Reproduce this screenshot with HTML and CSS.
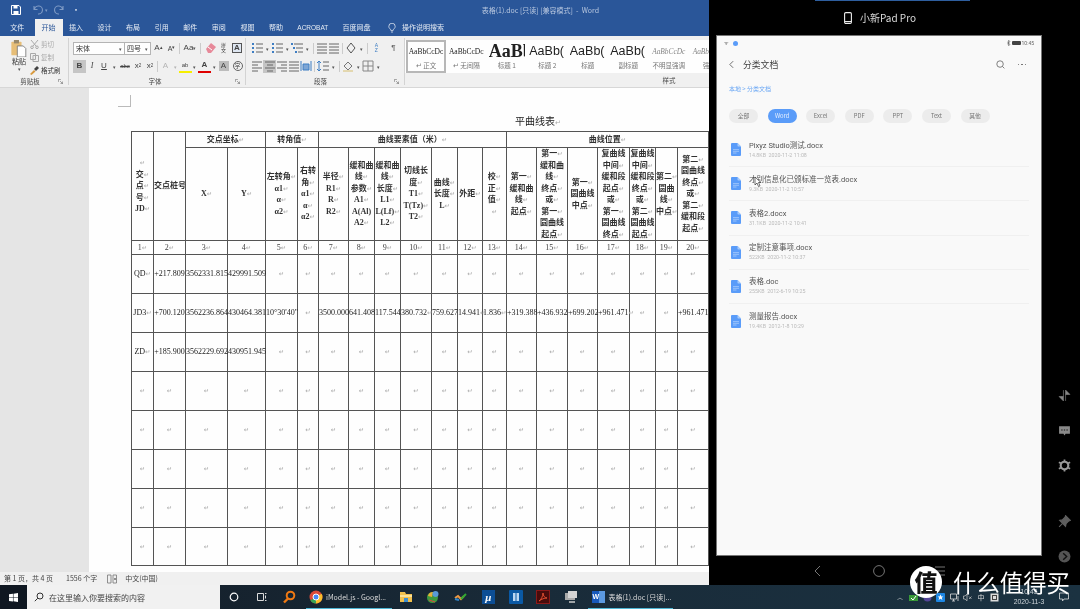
FILE: index.html
```html
<!DOCTYPE html>
<html lang="zh-CN">
<head>
<meta charset="utf-8">
<title>表格(1).doc - Word</title>
<link rel="stylesheet" href="styles.css">
</head>
<body>
<svg class="defs" aria-hidden="true"><defs>
<symbol id="doc" viewBox="0 0 10 13"><path d="M0 1a1 1 0 0 1 1-1h5.5L10 3.6V12a1 1 0 0 1-1 1H1a1 1 0 0 1-1-1z" fill="#5b9dfa"/><path d="M6.5 0L10 3.6H7.3a.8.8 0 0 1-.8-.8z" fill="#a9cdfc"/><path d="M2 6.6h6M2 8.3h6M2 10h3.5" stroke="#a9cdfc" stroke-width=".8"/></symbol>
<symbol id="lines" viewBox="0 0 12 12"><path d="M1 2h10M1 5h10M1 8h10M1 11h10" stroke="#666" fill="none"/></symbol>
<symbol id="clines" viewBox="0 0 12 12"><path d="M1 2h10M3 5h6M1 8h10M3 11h6" stroke="#666" fill="none"/></symbol>
<symbol id="llines" viewBox="0 0 12 12"><path d="M1 2h10M1 5h6M1 8h10M1 11h6" stroke="#666" fill="none"/></symbol>
<symbol id="rlines" viewBox="0 0 12 12"><path d="M1 2h10M5 5h6M1 8h10M5 11h6" stroke="#666" fill="none"/></symbol>
<symbol id="list" viewBox="0 0 12 12"><path d="M5 2h7M5 6h7M5 10h7" stroke="#666" fill="none"/><path d="M1 1h2v2H1zM1 5h2v2H1zM1 9h2v2H1z" fill="#3f7fc4"/></symbol>
<symbol id="launch" viewBox="0 0 6 6"><path d="M.5.5h3M.5.5v3M2.5 2.5l3 3M5.5 3v2.5H3" stroke="#777" fill="none" stroke-width=".8"/></symbol>
</defs></svg>
<div class="stage">
  <div class="main">
    <section class="word">
      <header class="titlebar">
        <div class="qat">
          <svg class="ic10" viewBox="0 0 10 10"><path d="M.5.5h7.5l1.500 1.500v7.500h-9z" fill="none" stroke="#fff"/><path d="M2.500 1h4v2.500h-4zM2.500 6h5v3h-5z" fill="#fff"/></svg>
          <svg class="ic10 dim" viewBox="0 0 10 10"><path d="M1 1v3.500h3.500M1.500 4.300A4 4 0 1 1 5 9" fill="none" stroke="#7f9bc6" stroke-width="1.100"/></svg>
          <span class="qat-arrow">▾</span>
          <svg class="ic10 dim" viewBox="0 0 10 10"><path d="M9 1v3.500H5.500M8.500 4.300A4 4 0 1 0 5 9" fill="none" stroke="#7f9bc6" stroke-width="1.100"/></svg>
          <span class="qat-more">▪</span>
        </div>
        <div class="wintitle">表格(1).doc [只读] [兼容模式]  -  Word</div>
      </header>
      <nav class="tabs">
        <span class="tab">文件</span><span class="tab active">开始</span><span class="tab">插入</span><span class="tab">设计</span><span class="tab">布局</span><span class="tab">引用</span><span class="tab">邮件</span><span class="tab">审阅</span><span class="tab">视图</span><span class="tab">帮助</span><span class="tab latin">ACROBAT</span><span class="tab">百度网盘</span>
        <svg class="bulb" viewBox="0 0 10 12"><path d="M3.500 9C3.300 7 1 6.500 1 4a4 4 0 0 1 8 0c0 2.500-2.300 3-2.500 5zM3.700 11h2.600" fill="none" stroke="#dfe7f3"/></svg>
        <span class="tab search">操作说明搜索</span>
      </nav>
      <div class="ribbon">
        <div class="group g-clip">
          <div class="group-body clip">
            <div class="paste">
              <svg class="paste-ic" viewBox="0 0 18 20"><rect x="0" y="2" width="12" height="16" rx="1" fill="#e8bf78"/><rect x="3" y="0" width="6" height="4" fill="#9a8a6c"/><path d="M7 7h7l3 3v10H7z" fill="#fff" stroke="#777"/></svg>
              <span>粘贴</span><i class="drop">▾</i>
            </div>
            <div class="clip-list">
              <span class="clip-item off"><svg class="ic9" viewBox="0 0 9 9"><path d="M1 0l5 6M8 0L3 6" stroke="#aaa" fill="none"/><circle cx="2" cy="7.300" r="1.300" fill="none" stroke="#aaa"/><circle cx="7" cy="7.300" r="1.300" fill="none" stroke="#aaa"/></svg>剪切</span>
              <span class="clip-item off"><svg class="ic9" viewBox="0 0 9 9"><path d="M.5.5h5v6h-5zM3 2.500h5.500v6H3z" stroke="#aaa" fill="#f1f1f1"/></svg>复制</span>
              <span class="clip-item"><svg class="ic9" viewBox="0 0 9 9"><path d="M0 8l4-4 1.500 1.500-4 3.500z" fill="#d99a3e"/><path d="M4 3l3-3 2 2-3 3z" fill="#444"/></svg>格式刷</span>
            </div>
          </div>
          <div class="group-label">剪贴板<svg class="launch" viewBox="0 0 6 6"><use href="#launch"/></svg></div>
        </div>
        <div class="group g-font">
          <div class="group-body">
            <div class="row">
              <span class="combo c-font">宋体<i>▾</i></span><span class="combo c-size">四号<i>▾</i></span>
              <span class="t w13 ml1">A<sup>▴</sup></span><span class="t w13 small">A<sup>▾</sup></span><span class="sep"></span><span class="t w18">Aa<i class="drop">▾</i></span><span class="sep"></span>
              <svg class="ic12 ml3" viewBox="0 0 12 12"><path d="M1 7l5-6 5 4-5 6H3z" fill="#e88a9a"/><path d="M3 5l4 3" stroke="#fff"/></svg>
              <span class="t w13 pin">拼<br>文</span>
              <span class="t boxed">A</span>
            </div>
            <div class="row">
              <span class="t w13 on b">B</span><span class="t w12 i">I</span><span class="t w12 u">U</span><i class="drop w8">▾</i><span class="t w14 st">abc</span><span class="t w12">x<sub>2</sub></span><span class="t w12">x<sup>2</sup></span><span class="sep"></span>
              <span class="t w13 fade">A</span><i class="drop w6 fade">▾</i>
              <span class="t w13 hl">ab</span><i class="drop w6">▾</i>
              <span class="t w13 redA">A</span><i class="drop w6">▾</i>
              <span class="t w13 shade">A</span>
              <span class="t w13 circ">字</span>
            </div>
          </div>
          <div class="group-label">字体<svg class="launch" viewBox="0 0 6 6"><use href="#launch"/></svg></div>
        </div>
        <div class="group g-para">
          <div class="group-body">
            <div class="row">
              <svg class="ic12" viewBox="0 0 12 12"><use href="#list"/></svg><i class="drop w8">▾</i>
              <svg class="ic12" viewBox="0 0 12 12"><use href="#list"/></svg><i class="drop w8">▾</i>
              <svg class="ic12" viewBox="0 0 12 12"><path d="M3 2h9M5 6h7M7 10h5" stroke="#666" fill="none"/><path d="M0 1h2v2H0zM2 5h2v2H2zM4 9h2v2H4z" fill="#3f7fc4"/></svg><i class="drop w8">▾</i>
              <span class="sep"></span>
              <svg class="ic12" viewBox="0 0 12 12"><use href="#lines"/></svg>
              <svg class="ic12" viewBox="0 0 12 12"><use href="#lines"/></svg>
              <span class="sep"></span>
              <svg class="ic12" viewBox="0 0 12 12"><path d="M6 1l4 5-4 5-4-5z" fill="none" stroke="#555"/></svg><i class="drop w8">▾</i>
              <span class="sep"></span>
              <span class="t w13 az">A<br>Z</span>
              <span class="t w13 pil">¶</span>
            </div>
            <div class="row">
              <svg class="ic12" viewBox="0 0 12 12"><use href="#llines"/></svg>
              <span class="on ctr"><svg class="ic12" viewBox="0 0 12 12"><use href="#clines"/></svg></span>
              <svg class="ic12" viewBox="0 0 12 12"><use href="#rlines"/></svg>
              <svg class="ic12" viewBox="0 0 12 12"><use href="#lines"/></svg>
              <svg class="ic12" viewBox="0 0 12 12"><path d="M1 1v10M11 1v10M3 4h6v6H3z" stroke="#3f7fc4" fill="#7fa7d6"/></svg>
              <span class="sep"></span>
              <svg class="ic12" viewBox="0 0 12 12"><path d="M2 1v10M0 3l2-2 2 2M0 9l2 2 2-2" stroke="#3f7fc4" fill="none"/><path d="M6 2h6M6 6h6M6 10h6" stroke="#666"/></svg><i class="drop w8">▾</i>
              <span class="sep"></span>
              <svg class="ic12" viewBox="0 0 12 12"><path d="M2 6l4-4 4 4-4 4z" fill="#eee" stroke="#777"/><path d="M1 11h10" stroke="#d8c070"/></svg><i class="drop w8">▾</i>
              <svg class="ic12" viewBox="0 0 12 12"><path d="M1 1h10v10H1zM6 1v10M1 6h10" fill="none" stroke="#888"/></svg><i class="drop w8">▾</i>
            </div>
          </div>
          <div class="group-label">段落<svg class="launch" viewBox="0 0 6 6"><use href="#launch"/></svg></div>
        </div>
        <div class="group g-style">
          <div class="gallery">
            <div class="sty selected"><span class="s s-body">AaBbCcDc</span><span class="l">↵ 正文</span></div>
            <div class="sty"><span class="s s-body">AaBbCcDc</span><span class="l">↵ 无间隔</span></div>
            <div class="sty"><span class="s s-h1">AaBb</span><span class="l">标题 1</span></div>
            <div class="sty"><span class="s s-h2">AaBb(</span><span class="l">标题 2</span></div>
            <div class="sty"><span class="s s-h2">AaBb(</span><span class="l">标题</span></div>
            <div class="sty"><span class="s s-h2">AaBb(</span><span class="l">副标题</span></div>
            <div class="sty"><span class="s s-em">AaBbCcDc</span><span class="l">不明显强调</span></div>
            <div class="sty"><span class="s s-em">AaBbCcDc</span><span class="l">强调</span></div>
          </div>
          <div class="group-label">样式</div>
        </div>
      </div>
      <div class="docarea">
        <div class="gutter"></div>
        <div class="page">
          <div class="crop"></div>
          <div class="doc-title">平曲线表<i>↵</i></div>
          <table class="sheet">
            <colgroup><col class="k22"><col class="k32"><col class="k42"><col class="k38"><col class="k32"><col class="k21"><col class="k30"><col class="k26"><col class="k26"><col class="k31"><col class="k26"><col class="k25"><col class="k24"><col class="k30"><col class="k31"><col class="k30"><col class="k32"><col class="k26"><col class="k22"><col class="k31"></colgroup>
            <thead>
              <tr class="h1">
                <th rowspan="2"><i>↵</i><br>交<i>↵</i><br>点<i>↵</i><br>号<i>↵</i><br>JD<i>↵</i></th>
                <th rowspan="2">交点桩号</th>
                <th colspan="2">交点坐标<i>↵</i></th>
                <th colspan="2">转角值<i>↵</i></th>
                <th colspan="7">曲线要素值（米）<i>↵</i></th>
                <th colspan="7">曲线位置<i>↵</i></th>
              </tr>
              <tr class="h2">
                <th>X<i>↵</i></th><th>Y<i>↵</i></th>
                <th>左转角<i>↵</i><br>α1<i>↵</i><br>α<i>↵</i><br>α2<i>↵</i></th>
                <th>右转<br>角<i>↵</i><br>α1<i>↵</i><br>α<i>↵</i><br>α2<i>↵</i></th>
                <th>半径<i>↵</i><br>R1<i>↵</i><br>R<i>↵</i><br>R2<i>↵</i></th>
                <th>缓和曲<br>线<i>↵</i><br>参数<i>↵</i><br>A1<i>↵</i><br>A(Al)<br>A2<i>↵</i></th>
                <th>缓和曲<br>线<i>↵</i><br>长度<i>↵</i><br>L1<i>↵</i><br>L(Lf)<i>↵</i><br>L2<i>↵</i></th>
                <th>切线长<br>度<i>↵</i><br>T1<i>↵</i><br>T(Tz)<i>↵</i><br>T2<i>↵</i></th>
                <th>曲线<i>↵</i><br>长度<i>↵</i><br>L<i>↵</i></th>
                <th>外距<i>↵</i></th>
                <th>校<i>↵</i><br>正<i>↵</i><br>值<i>↵</i><br><i>↵</i></th>
                <th>第一<i>↵</i><br>缓和曲<br>线<i>↵</i><br>起点<i>↵</i></th>
                <th>第一<i>↵</i><br>缓和曲<br>线<i>↵</i><br>终点<i>↵</i><br>或<i>↵</i><br>第一<i>↵</i><br>圆曲线<br>起点<i>↵</i></th>
                <th>第一<i>↵</i><br>圆曲线<br>中点<i>↵</i></th>
                <th>复曲线<br>中间<i>↵</i><br>缓和段<br>起点<i>↵</i><br>或<i>↵</i><br>第一<i>↵</i><br>圆曲线<br>终点<i>↵</i></th>
                <th>复曲线<br>中间<i>↵</i><br>缓和段<br>终点<i>↵</i><br>或<i>↵</i><br>第二<i>↵</i><br>圆曲线<br>起点<i>↵</i></th>
                <th>第二<i>↵</i><br>圆曲<br>线<i>↵</i><br>中点<i>↵</i></th>
                <th>第二<i>↵</i><br>圆曲线<br>终点<i>↵</i><br>或<i>↵</i><br>第二<i>↵</i><br>缓和段<br>起点<i>↵</i></th>
              </tr>
            </thead>
            <tbody>
              <tr class="nums"><td>1<i>↵</i></td><td>2<i>↵</i></td><td>3<i>↵</i></td><td>4<i>↵</i></td><td>5<i>↵</i></td><td>6<i>↵</i></td><td>7<i>↵</i></td><td>8<i>↵</i></td><td>9<i>↵</i></td><td>10<i>↵</i></td><td>11<i>↵</i></td><td>12<i>↵</i></td><td>13<i>↵</i></td><td>14<i>↵</i></td><td>15<i>↵</i></td><td>16<i>↵</i></td><td>17<i>↵</i></td><td>18<i>↵</i></td><td>19<i>↵</i></td><td>20<i>↵</i></td></tr>
              <tr><td>QD<i>↵</i></td><td>+217.809</td><td>3562331.815</td><td>429991.509</td><td><i>↵</i></td><td><i>↵</i></td><td><i>↵</i></td><td><i>↵</i></td><td><i>↵</i></td><td><i>↵</i></td><td><i>↵</i></td><td><i>↵</i></td><td><i>↵</i></td><td><i>↵</i></td><td><i>↵</i></td><td><i>↵</i></td><td><i>↵</i></td><td><i>↵</i></td><td><i>↵</i></td><td><i>↵</i></td></tr>
              <tr><td>JD3<i>↵</i></td><td>+700.120</td><td>3562236.864</td><td>430464.381</td><td>10°30'40"</td><td><i>↵</i></td><td>3500.000</td><td>641.408</td><td>117.544</td><td>380.732<i>↵</i></td><td>759.627</td><td>14.941<i>↵</i></td><td>1.836<i>↵</i></td><td>+319.388</td><td>+436.932</td><td>+699.202</td><td>+961.471<i>↵</i></td><td><i>↵</i></td><td><i>↵</i></td><td>+961.471<i>↵</i></td></tr>
              <tr><td>ZD<i>↵</i></td><td>+185.900</td><td>3562229.692</td><td>430951.945</td><td><i>↵</i></td><td><i>↵</i></td><td><i>↵</i></td><td><i>↵</i></td><td><i>↵</i></td><td><i>↵</i></td><td><i>↵</i></td><td><i>↵</i></td><td><i>↵</i></td><td><i>↵</i></td><td><i>↵</i></td><td><i>↵</i></td><td><i>↵</i></td><td><i>↵</i></td><td><i>↵</i></td><td><i>↵</i></td></tr>
              <tr><td><i>↵</i></td><td><i>↵</i></td><td><i>↵</i></td><td><i>↵</i></td><td><i>↵</i></td><td><i>↵</i></td><td><i>↵</i></td><td><i>↵</i></td><td><i>↵</i></td><td><i>↵</i></td><td><i>↵</i></td><td><i>↵</i></td><td><i>↵</i></td><td><i>↵</i></td><td><i>↵</i></td><td><i>↵</i></td><td><i>↵</i></td><td><i>↵</i></td><td><i>↵</i></td><td><i>↵</i></td></tr>
              <tr><td><i>↵</i></td><td><i>↵</i></td><td><i>↵</i></td><td><i>↵</i></td><td><i>↵</i></td><td><i>↵</i></td><td><i>↵</i></td><td><i>↵</i></td><td><i>↵</i></td><td><i>↵</i></td><td><i>↵</i></td><td><i>↵</i></td><td><i>↵</i></td><td><i>↵</i></td><td><i>↵</i></td><td><i>↵</i></td><td><i>↵</i></td><td><i>↵</i></td><td><i>↵</i></td><td><i>↵</i></td></tr>
              <tr><td><i>↵</i></td><td><i>↵</i></td><td><i>↵</i></td><td><i>↵</i></td><td><i>↵</i></td><td><i>↵</i></td><td><i>↵</i></td><td><i>↵</i></td><td><i>↵</i></td><td><i>↵</i></td><td><i>↵</i></td><td><i>↵</i></td><td><i>↵</i></td><td><i>↵</i></td><td><i>↵</i></td><td><i>↵</i></td><td><i>↵</i></td><td><i>↵</i></td><td><i>↵</i></td><td><i>↵</i></td></tr>
              <tr><td><i>↵</i></td><td><i>↵</i></td><td><i>↵</i></td><td><i>↵</i></td><td><i>↵</i></td><td><i>↵</i></td><td><i>↵</i></td><td><i>↵</i></td><td><i>↵</i></td><td><i>↵</i></td><td><i>↵</i></td><td><i>↵</i></td><td><i>↵</i></td><td><i>↵</i></td><td><i>↵</i></td><td><i>↵</i></td><td><i>↵</i></td><td><i>↵</i></td><td><i>↵</i></td><td><i>↵</i></td></tr>
              <tr><td><i>↵</i></td><td><i>↵</i></td><td><i>↵</i></td><td><i>↵</i></td><td><i>↵</i></td><td><i>↵</i></td><td><i>↵</i></td><td><i>↵</i></td><td><i>↵</i></td><td><i>↵</i></td><td><i>↵</i></td><td><i>↵</i></td><td><i>↵</i></td><td><i>↵</i></td><td><i>↵</i></td><td><i>↵</i></td><td><i>↵</i></td><td><i>↵</i></td><td><i>↵</i></td><td><i>↵</i></td></tr>
            </tbody>
          </table>
          <div class="after"><i>↵</i></div>
        </div>
      </div>
      <footer class="status">
        <span>第 1 页，共 4 页</span><span>1556 个字</span>
        <svg class="ic10" viewBox="0 0 10 10"><path d="M.5 1h3.500v8H.5zM6 1h3.500v8H6zM7 4l2 2M9 4L7 6" fill="none" stroke="#777" stroke-width=".8"/></svg>
        <span>中文(中国)</span>
      </footer>
    </section>
    <section class="mirror">
      <div class="mirror-main">
        <div class="mirror-title">
          <svg class="phone" viewBox="0 0 8 12"><rect x=".6" y=".6" width="6.800" height="10.800" rx="1.200" fill="none" stroke="#eee" stroke-width="1.100"/><path d="M.6 9.500h6.800" stroke="#eee"/></svg>
          <span>小新Pad Pro</span>
        </div>
        <div class="tablet">
          <div class="t-status">
            <span class="t-sig">ᯤ</span><span class="t-dot"></span>
            <span class="t-right"><svg class="t-bt" viewBox="0 0 4 6"><path d="M0 1.500l3 3-1.500 1.200V.3L3 1.500l-3 3" fill="none" stroke="#555" stroke-width=".6"/></svg><span class="t-batt"></span>10:45</span>
          </div>
          <div class="t-head">
            <svg class="t-back" viewBox="0 0 6 10"><path d="M5 1L1 5l4 4" fill="none" stroke="#555" stroke-width="1"/></svg>
            <span class="t-name">分类文档</span>
            <svg class="t-search" viewBox="0 0 10 10"><circle cx="4.500" cy="4.500" r="3.600" fill="none" stroke="#666" stroke-width=".9"/><path d="M7.200 7.200L9.300 9.300" stroke="#666" stroke-width=".9"/></svg>
            <span class="t-dots"><b></b><b></b><b></b></span>
          </div>
          <div class="crumb">本地 &gt; 分类文档</div>
          <div class="chips"><span class="chip">全部</span><span class="chip cur">Word</span><span class="chip">Excel</span><span class="chip">PDF</span><span class="chip">PPT</span><span class="chip">Text</span><span class="chip">其他</span></div>
          <ul class="files">
            <li><svg class="f-ic"><use href="#doc"/></svg><div><div class="f-n">Pixyz Studio测试.docx</div><div class="f-m">14.8KB&nbsp; 2020-11-2 11:08</div></div></li>
            <li><svg class="f-ic"><use href="#doc"/></svg><div><div class="f-n">才别信息化已颁标准一览表.docx</div><div class="f-m">9.3KB&nbsp; 2020-11-2 10:57</div></div><svg class="cursor" viewBox="0 0 8 12"><path d="M1 1v8l2-2 1.500 3.500 1.500-.7L4.500 6.500H7z" fill="#fff" stroke="#333" stroke-width=".7"/></svg></li>
            <li><svg class="f-ic"><use href="#doc"/></svg><div><div class="f-n">表格2.docx</div><div class="f-m">31.1KB&nbsp; 2020-11-2 10:41</div></div></li>
            <li><svg class="f-ic"><use href="#doc"/></svg><div><div class="f-n">定制注意事项.docx</div><div class="f-m">522KB&nbsp; 2020-11-2 10:37</div></div></li>
            <li><svg class="f-ic"><use href="#doc"/></svg><div><div class="f-n">表格.doc</div><div class="f-m">255KB&nbsp; 2012-6-19 10:25</div></div></li>
            <li><svg class="f-ic"><use href="#doc"/></svg><div><div class="f-n">测量报告.docx</div><div class="f-m">19.4KB&nbsp; 2012-1-8 10:29</div></div></li>
          </ul>
        </div>
        <div class="softkeys">
          <svg class="key" viewBox="0 0 12 12"><path d="M8 1L3 6l5 5" fill="none" stroke="#777"/></svg>
          <svg class="key" viewBox="0 0 12 12"><circle cx="6" cy="6" r="5.400" fill="none" stroke="#777"/></svg>
          <svg class="key" viewBox="0 0 12 12"><path d="M1 2h10M1 6h10M1 10h10" stroke="#777"/></svg>
        </div>
      </div>
      <aside class="rail">
        <svg class="rail-ic" viewBox="0 0 12 12"><path d="M5 1v10L1 7h4M7 11V1l4 4H7" fill="#8a8a8a" stroke="#8a8a8a" stroke-width=".6"/></svg>
        <svg class="rail-ic" viewBox="0 0 12 12"><path d="M1 2h10v7H7l-1 1.500L5 9H1z" fill="#8a8a8a"/><path d="M3 5.500h1.200M5.400 5.500h1.200M7.800 5.500H9" stroke="#111"/></svg>
        <svg class="rail-ic" viewBox="0 0 12 12"><circle cx="6" cy="6" r="3.500" fill="none" stroke="#999" stroke-width="2"/><path d="M6 .5v2M6 9.500v2M.8 3l1.800 1M9.400 8l1.800 1M.8 9l1.800-1M9.400 4l1.800-1" stroke="#999" stroke-width="1.600"/></svg>
        <svg class="rail-ic gap" viewBox="0 0 12 12"><path d="M7 .5l4.500 4.500-1.500.5L7.500 8l-.5 2.500L1.500 5 4 4.500 6.500 2zM4 8l-3 3" fill="#5f5f5f" stroke="#5f5f5f"/></svg>
        <svg class="rail-ic" viewBox="0 0 12 12"><circle cx="6" cy="6" r="5.500" fill="#555"/><path d="M4.800 3L8 6l-3.200 3" fill="none" stroke="#111" stroke-width="1.300"/></svg>
      </aside>
    </section>
  </div>
  <footer class="taskbar">
    <div class="start"><svg class="win" viewBox="0 0 10 10"><path d="M0 1.400l4.400-.6v4H0zM5 .7L10 0v4.800H5zM0 5.400h4.400v4L0 8.800zM5 5.400h5V10l-5-.7z" fill="#fff"/></svg></div>
    <div class="tsearch"><svg class="ic10" viewBox="0 0 10 10"><circle cx="6" cy="4" r="3" fill="none" stroke="#333"/><path d="M3.800 6.200L.8 9.200" stroke="#333"/></svg><span>在这里输入你要搜索的内容</span></div>
    <div class="tb w28"><svg class="ic10" viewBox="0 0 10 10"><circle cx="5" cy="5" r="3.800" fill="none" stroke="#fff" stroke-width="1.200"/></svg></div>
    <div class="tb w28"><svg class="ic10" viewBox="0 0 10 10"><path d="M.5 1.500h6v7h-6zM8 1.500h1.500M8 8.500h1.500M8.500 3.500v3" fill="none" stroke="#ddd"/></svg></div>
    <div class="tb w26"><svg class="ic14" viewBox="0 0 14 14"><circle cx="8.500" cy="5.500" r="3.800" fill="none" stroke="#f07a14" stroke-width="2"/><path d="M6 8.500l-4 4" stroke="#f07a14" stroke-width="2.400"/></svg></div>
    <div class="task chrome">
      <svg class="ic14" viewBox="0 0 14 14"><circle cx="7" cy="7" r="6.500" fill="#dd4b39"/><path d="M7 7L1.400 10.200A6.500 6.500 0 0 0 7 13.500z" fill="#3aa757"/><path d="M7 7l5.600-3.200A6.500 6.500 0 0 1 7 13.500z" fill="#fbc02d"/><circle cx="7" cy="7" r="3" fill="#4a8af4" stroke="#fff"/></svg>
      <span>iModel.js - Googl...</span>
    </div>
    <div class="tb w27"><svg class="ic14" viewBox="0 0 14 14"><path d="M1 2h5l1 2h6v8H1z" fill="#f2c14e"/><path d="M1 5h12v2H1z" fill="#fbe29a"/><path d="M5 8h4v4H5z" fill="#3f8fd2"/></svg></div>
    <div class="tb w27"><svg class="ic14" viewBox="0 0 14 14"><circle cx="6.500" cy="7.500" r="5.500" fill="#3f9b3f"/><path d="M2 6a5 5 0 0 1 5-4l-1 5z" fill="#e8b13a"/><circle cx="9.500" cy="4" r="3" fill="#5a9bd8"/><path d="M3 10l6 2" stroke="#d44"/></svg></div>
    <div class="tb w27"><svg class="ic14" viewBox="0 0 14 14"><path d="M1 8l3-2 3 3 3-3" fill="none" stroke="#e94" stroke-width="2"/><path d="M7 9l5-5" stroke="#3a3" stroke-width="2"/><path d="M1 9l4 1" stroke="#38c" stroke-width="2"/></svg></div>
    <div class="tb w27"><span class="app-mu">μ</span></div>
    <div class="tb w27"><svg class="ic14" viewBox="0 0 14 14"><rect width="14" height="14" rx="1" fill="#0b5aa6"/><path d="M4 3h6v8H4z" fill="#bcd8f2"/><path d="M7 3v8" stroke="#0b5aa6"/></svg></div>
    <div class="tb w27"><svg class="ic14" viewBox="0 0 14 14"><rect x=".5" y=".5" width="13" height="13" fill="#4a0d0d" stroke="#8c1a1a"/><path d="M3 11c2-1 4-5 4-8 0 3 2 5 4 5-3 0-5 1-8 3z" fill="none" stroke="#e53" stroke-width=".9"/></svg></div>
    <div class="tb w27"><svg class="ic14" viewBox="0 0 14 14"><path d="M1 3h10v7H1z" fill="#aaa"/><path d="M4 1h9v7H4z" fill="#d5d5d5"/><path d="M5 12h6" stroke="#ccc" stroke-width="1.500"/></svg></div>
    <div class="task word-task">
      <span class="w-badge">W</span>
      <span>表格(1).doc [只读]...</span>
    </div>
    <div class="tray">
      <span class="ti chev">︿</span>
      <svg class="ti-ic" viewBox="0 0 9 9"><path d="M0 2h9v6H0z" fill="#3a9a3a"/><path d="M2 5l2 2 3-4" stroke="#fff" fill="none"/></svg>
      <svg class="ti-ic" viewBox="0 0 9 9"><circle cx="4.500" cy="4.500" r="4" fill="#55479a"/></svg>
      <svg class="ti-ic" viewBox="0 0 9 9"><rect width="9" height="9" rx="1" fill="#1e88e5"/><path d="M4.500 1.500l.9 2h2l-1.600 1.300.6 2.200-1.900-1.300-1.900 1.300.6-2.200L1.600 3.500h2z" fill="#fff"/></svg>
      <svg class="ti-ic" viewBox="0 0 9 9"><path d="M.5 1h6v5h-6zM3.500 6v2M2 8h3M8 3v5" fill="none" stroke="#ddd" stroke-width=".8"/></svg>
      <svg class="ti-ic" viewBox="0 0 9 9"><path d="M.5 3h1.500L4 1.200v6.600L2 6H.5zM6 3.500l2.500 2.500M8.500 3.500L6 6" fill="none" stroke="#ccc" stroke-width=".7"/></svg>
      <span class="ti">中</span>
      <svg class="ti-ic" viewBox="0 0 9 9"><rect x=".5" y=".5" width="8" height="8" fill="#ddd"/><rect x="2.500" y="2.500" width="4" height="4" fill="none" stroke="#444"/></svg>
      <div class="clock"><span>10:45</span><span>2020-11-3</span></div>
      <svg class="notify" viewBox="0 0 10 10"><path d="M.5 1h9v6H5L3.500 9V7h-3z" fill="none" stroke="#ddd" stroke-width=".8"/></svg>
    </div>
  </footer>
</div>
<div class="mark"><span class="mark-logo">值</span><span class="mark-text">什么值得买</span></div>
</body>
</html>
```

FILE: styles.css
```css
* { box-sizing: border-box; }
html, body { margin: 0; padding: 0; }
body { position: relative; width: 1080px; height: 609px; overflow: hidden; background: #000; font-family: "Noto Sans CJK SC", "Liberation Sans", sans-serif; }
i { font-style: normal; }
ul { list-style: none; margin: 0; padding: 0; }
svg { display: block; flex: none; }
.defs { width: 0; height: 0; position: absolute; }
.stage { width: 1080px; height: 609px; display: flex; flex-direction: column; filter: blur(.3px); opacity: .999; will-change: transform; }
.main { height: 585px; display: flex; }

/* Word window */
.word { width: 709px; height: 585px; display: flex; flex-direction: column; background: #f1f1f1; overflow: hidden; }
.titlebar { height: 19px; background: #2b579a; display: flex; align-items: center; padding-left: 11px; flex: none; }
.qat { display: flex; align-items: center; width: 200px; }
.ic10 { width: 10px; height: 10px; }
.ic9 { width: 9px; height: 9px; }
.ic12 { width: 12px; height: 12px; }
.ic14 { width: 14px; height: 14px; }
.qat .dim { margin-left: 12px; }
.qat-arrow { font-size: 5px; color: #7f9bc6; margin-left: 2px; }
.qat .qat-arrow + .dim { margin-left: 6px; }
.qat-more { color: #c7d3e6; font-size: 6px; margin-left: 9px; }
.wintitle { margin-left: 273px; width: 230px; white-space: pre; font-size: 7px; line-height: 16px; color: #b9c8e0; }
.tabs { height: 17px; background: #2b579a; display: flex; align-items: center; flex: none; padding-left: 3px; }
.tab { color: #e6ecf5; font-size: 7px; line-height: 17px; padding: 0 7.300px; white-space: nowrap; }
.tab.active { background: #f1f1f1; color: #2b579a; width: 28px; margin: 0 -1px 0 3px; padding: 0; text-align: center; }
.tab.latin { font-family: "Liberation Sans", sans-serif; font-size: 6.500px; padding: 0 7px; }
.bulb { width: 8px; height: 10px; margin-left: 10px; }
.tab.search { padding-left: 6px; }

.ribbon { height: 52px; display: flex; flex: none; background: #f1f1f1; border-bottom: 1px solid #d8d8d8; }
.group { display: flex; flex-direction: column; border-right: 1px solid #d4d4d4; margin: 2px 0; flex: none; }
.group-body { height: 40px; }
.group-label { position: relative; height: 8px; font-size: 6.500px; line-height: 8px; color: #444; text-align: center; }
.launch { position: absolute; right: 1px; top: 2px; width: 5px; height: 5px; }
.g-clip { width: 69px; }
.g-clip .group-label { margin-right: 8px; }
.g-clip .launch { right: -3px; }
.g-font { width: 177px; padding-left: 4px; }
.g-font .group-label { margin-right: 8px; }
.g-font .launch { right: -3px; }
.g-font .sep { margin: 0 1px; }
.g-para { width: 159px; padding-left: 5px; }
.g-para .group-label { margin-right: 14px; }
.g-para .launch { right: -9px; }
.g-para .sep { margin: 0 2px; }
.g-style { width: 304px; border: 0; }
.g-style .group-label { padding-left: 224px; margin-top: 0; }
.clip { display: flex; padding: 2px 0 0 8px; }
.paste { width: 22px; display: flex; flex-direction: column; align-items: center; font-size: 7px; line-height: 9px; color: #333; }
.paste-ic { width: 16px; height: 17px; }
.paste .drop { line-height: 5px; }
.clip-list { display: flex; flex-direction: column; gap: 3px; margin-top: -1px; }
.clip-item { display: flex; align-items: center; gap: 2px; font-size: 6.500px; line-height: 10px; color: #333; white-space: nowrap; }
.clip-item.off { color: #aaa; }
.row { display: flex; align-items: center; height: 18px; }
.row:first-child { margin-top: 1px; }
.combo { display: flex; flex: none; justify-content: space-between; align-items: center; height: 13px; background: #fff; border: 1px solid #b5b5b5; font-size: 7px; color: #333; padding: 0 2px; }
.combo i { font-size: 5px; color: #555; }
.c-font { width: 52px; }
.c-size { width: 27px; margin-left: -1px; }
.t { display: flex; align-items: center; justify-content: center; height: 13px; font: 8px/1 "Liberation Sans", sans-serif; color: #444; flex: none; }
.t sup, .t sub { font-size: 4.500px; line-height: 0; }
.drop { font-size: 5px; color: #555; text-align: center; flex: none; }
.w6 { width: 6.500px; } .w8 { width: 8px; } .w12 { width: 12px; } .w13 { width: 13px; } .w14 { width: 14px; } .w18 { width: 18px; }
.ml1 { margin-left: 1px; } .ml3 { margin-left: 3px; }
.small { font-size: 7px; }
.sep { width: 1px; height: 11px; background: #ccc; margin: 0 3px; flex: none; }
.pin { font-size: 5px; line-height: 5px; text-align: center; flex-direction: column; }
.boxed { width: 10px; height: 10px; border: 1px solid #555; background: #dfe7f2; font-weight: 700; margin-left: 2px; }
.on { background: #c6c6c6; }
.b { font-weight: 700; }
.i { font-style: italic; font-family: "Liberation Serif", serif; }
.u { text-decoration: underline; }
.st { text-decoration: line-through; font-size: 6px; }
.fade { color: #b5b5b5; }
.hl { border-bottom: 2px solid #f7f000; font-size: 6px; }
.redA { border-bottom: 2px solid #e00000; font-weight: 700; }
.shade { background: #bdbdbd; width: 10px; height: 10px; margin: 0 1px; }
.circ { border: 1px solid #666; border-radius: 50%; width: 10px; height: 10px; margin-left: 3px; font: 6px/1 "Noto Sans CJK SC", sans-serif; }
.ctr { display: flex; align-items: center; justify-content: center; width: 13px; height: 13px; }
.az { flex-direction: column; font-size: 5px; color: #3f7fc4; }
.pil { color: #666; margin-left: 4px; }
.gallery { height: 33px; margin: 2px 0 3px 0; background: #fff; display: flex; overflow: hidden; padding: 0 0 0 1px; }
.sty { width: 40.500px; height: 33px; flex: none; display: flex; flex-direction: column; align-items: center; justify-content: flex-end; overflow: hidden; padding-bottom: 3px; }
.sty.selected { border: 2px solid #b8b8b8; width: 40px; padding-bottom: 1px; }
.s { display: block; width: 36px; height: 19px; overflow: hidden; white-space: nowrap; text-align: center; color: #222; font-family: "Liberation Sans", sans-serif; line-height: 19px; }
.l { font-size: 6.500px; line-height: 9px; color: #777; white-space: nowrap; }
.s-body { font: 7.500px/19px "Liberation Serif", serif; }
.s-h1 { font: 700 18px/19px "Liberation Serif", serif; text-align: left; }
.s-h2 { font-size: 12.500px; text-align: left; }
.s-em { font: italic 7.400px/19px "Liberation Serif", serif; color: #888; }

/* Document */
.docarea { height: 484px; display: flex; flex: none; overflow: hidden; }
.gutter { width: 89px; background: #e6e6e6; flex: none; }
.page { position: relative; width: 620px; background: #fff; padding: 26px 0 0 42px; flex: none; }
.crop { position: absolute; left: 29px; top: 7px; width: 13px; height: 12px; border-right: 1px solid #bbb; border-bottom: 1px solid #bbb; }
.doc-title { margin-left: 384px; height: 17px; font-size: 10px; line-height: 14px; color: #222; white-space: nowrap; }
.doc-title i { color: #aaa; font-size: 7px; line-height: 0; font-family: "DejaVu Sans", sans-serif; }
.sheet { table-layout: fixed; border-collapse: collapse; width: 578px; color: #222; border: 1px solid #555; }
.sheet th, .sheet td { border: 1px solid #555; padding: 0; text-align: center; vertical-align: middle; white-space: nowrap; font-size: 8px; line-height: 11.500px; overflow: visible; }
.sheet th { font-weight: 700; color: #333; font-family: "Liberation Serif", "Noto Sans CJK SC", serif; }
.sheet td { font-family: "Liberation Serif", "Noto Sans CJK SC", serif; height: 39px; }
.sheet i { color: #aaa; font-size: 6.500px; line-height: 0; font-weight: 400; font-family: "DejaVu Sans", sans-serif; }
.h1 th { height: 16px; }
.h2 th { height: 91px; }
.sheet .nums td { height: 14px; line-height: 12px; color: #444; }
.sheet tbody tr:last-child td { height: 38px; }
.k22 { width: 22px; } .k32 { width: 32px; } .k42 { width: 42px; } .k38 { width: 38px; } .k21 { width: 21px; } .k30 { width: 30px; } .k26 { width: 26px; } .k31 { width: 31px; } .k25 { width: 25px; } .k24 { width: 24px; }
.after { padding-left: 1px; height: 6px; line-height: 6px; }
.after i { color: #aaa; font-size: 6px; line-height: 0; font-family: "DejaVu Sans", sans-serif; }
.status { height: 13px; flex: none; display: flex; align-items: center; padding-left: 4px; font-size: 7px; line-height: 13px; color: #444; background: #f1f1f1; }
.status span:nth-child(2) { margin-left: 13px; }
.status svg { margin-left: 10px; }
.status span:last-child { margin-left: 8px; }

/* Mirror panel */
.mirror { position: relative; width: 371px; height: 585px; background: #000; display: flex; }
.mirror::before { content: ""; position: absolute; left: 106px; top: 0; width: 155px; height: 1px; background: #2f5f9f; }
.mirror-main { width: 333px; padding-left: 7px; display: flex; flex-direction: column; }
.mirror-title { height: 35px; width: 326px; padding-left: 2px; display: flex; align-items: center; justify-content: center; gap: 8px; color: #dcdcdc; font-size: 10px; flex: none; }
.phone { width: 8px; height: 12px; }
.tablet { width: 326px; height: 521px; background: #fafafa; border: 1px solid #777; display: flex; flex-direction: column; flex: none; }
.t-status { height: 14px; display: flex; align-items: center; padding: 0 7px; font-size: 5px; color: #666; flex: none; }
.t-sig { width: 6px; font-size: 5px; line-height: 6px; font-family: "DejaVu Sans", sans-serif; }
.t-dot { width: 5px; height: 5px; border-radius: 50%; background: #5b9dfa; margin-left: 3px; }
.t-right { margin-left: auto; display: flex; align-items: center; font-family: "Roboto", sans-serif; }
.t-bt { width: 4px; height: 6px; margin-right: 1px; }
.t-batt { width: 9px; height: 4px; background: #444; border-radius: 1px; margin-right: 1px; }
.t-head { height: 29px; display: flex; align-items: center; padding-left: 12px; flex: none; }
.t-back { width: 5px; height: 9px; }
.t-name { margin-left: 9px; font-size: 8.800px; color: #444; }
.t-search { width: 9px; height: 9px; margin-left: auto; }
.t-dots { display: flex; gap: 2px; margin: 0 15px 0 13px; }
.t-dots b { width: 1.500px; height: 1.500px; background: #666; border-radius: 50%; }
.crumb { height: 20px; padding-left: 12px; font-size: 6px; line-height: 20px; color: #6aa7f5; flex: none; }
.chips { display: flex; gap: 9.600px; padding: 10px 0 0 12px; height: 34px; flex: none; }
.chip { width: 29px; height: 13.500px; border-radius: 7px; background: #ededed; color: #777; font: 5.800px/13.500px "Noto Sans CJK SC", sans-serif; text-align: center; }
.chip.cur { background: #5b9dfa; color: #e8f1ff; }
.files { padding: 0 12px; }
.files li { position: relative; height: 34.200px; display: flex; align-items: center; border-bottom: 1px solid #f1f1f1; }
.files li:last-child { border: 0; }
.f-ic { width: 10px; height: 13px; margin: 0 8px 0 2px; }
.f-n { font: 7.500px/10px "Roboto", "Noto Sans CJK SC", sans-serif; color: #555; white-space: nowrap; }
.f-m { font-size: 5.300px; line-height: 8px; color: #bbb; white-space: nowrap; font-family: "Roboto", sans-serif; }
.cursor { position: absolute; left: 25px; top: 9px; width: 8px; height: 12px; }
.softkeys { flex: 1; display: flex; align-items: center; justify-content: center; gap: 49px; padding-right: 1px; }
.key { width: 12px; height: 12px; }
.rail { flex: 1; display: flex; flex-direction: column; align-items: center; gap: 22px; padding: 389px 0 0 6px; }
.rail-ic { width: 13px; height: 13px; }
.rail-ic.gap { margin-top: 21px; }

/* Taskbar */
.taskbar { height: 24px; display: flex; align-items: center; flex: none; background: linear-gradient(90deg, #141d27, #1a2c3a 50%, #1c3342); color: #ddd; }
.start { width: 27px; height: 24px; display: flex; align-items: center; justify-content: center; background: #101822; }
.win { width: 9px; height: 9px; }
.tsearch { width: 193px; height: 24px; background: #f2f2f2; display: flex; align-items: center; gap: 5px; padding-left: 7px; font-size: 8px; color: #444; }
.tb { height: 24px; display: flex; align-items: center; justify-content: center; flex: none; }
.w28 { width: 28px; } .w26 { width: 26px; } .w27 { width: 27.500px; }
.task { height: 24px; display: flex; align-items: center; gap: 3px; font-size: 7px; color: #ddd; border-bottom: 1px solid #4fb8d6; padding-left: 3px; white-space: nowrap; overflow: hidden; flex: none; }
.chrome { margin-left: 4px; width: 86px; }
.word-task { margin-left: 3px; width: 85px; gap: 4px; padding-left: 4px; }
.app-mu { width: 13px; height: 14px; background: #0d4f96; color: #fff; font: italic 700 11px/14px "Liberation Serif", serif; text-align: center; }
.w-badge { width: 13px; height: 12px; background: linear-gradient(90deg, #185abd 55%, #5d9ae0 55%); color: #fff; font: 700 7px/12px "Liberation Sans", sans-serif; padding-left: 1px; }
.tray { margin-left: auto; display: flex; align-items: center; gap: 4.500px; padding-right: 11px; }
.ti { font-size: 7px; width: 9px; text-align: center; color: #ddd; line-height: 10px; }
.chev { font-size: 6px; }
.ti-ic { width: 9px; height: 9px; }
.clock { width: 45px; margin-left: 3px; display: flex; flex-direction: column; align-items: center; font: 6.800px/10px "Liberation Sans", sans-serif; color: #cfd6db; }
.notify { width: 10px; height: 10px; margin-left: 3px; }

/* Site watermark */
.mark { position: absolute; left: 910px; top: 566px; display: flex; align-items: center; gap: 11px; }
.mark-logo { width: 32px; height: 32px; border-radius: 50%; background: #fff; color: #111; font: 900 23px/31px "Noto Sans CJK SC", sans-serif; text-align: center; }
.mark-text { font-size: 23.400px; line-height: 30px; color: #fff; white-space: nowrap; font-weight: 400; }
```
